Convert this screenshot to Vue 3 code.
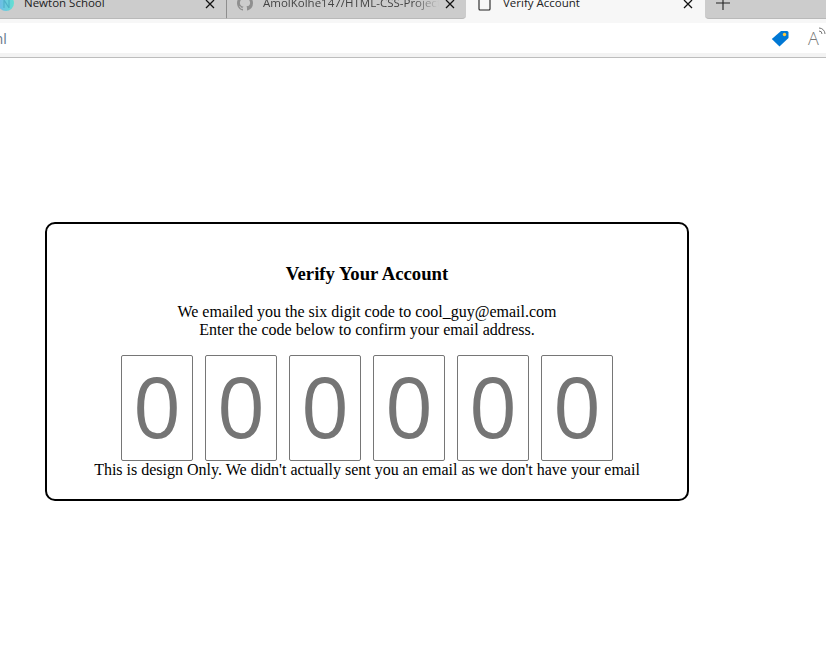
<script setup>
const digits = [0, 1, 2, 3, 4, 5];
</script>

<template>
  <div class="browser">
    <div class="tabstrip">
      <div class="tab first">
        <svg class="favicon" width="16" height="16" viewBox="0 0 16 16">
          <defs>
            <linearGradient id="fav" x1="0" y1="0" x2="1" y2="0">
              <stop offset="0" stop-color="#6fb7e8" />
              <stop offset="1" stop-color="#63e0d2" />
            </linearGradient>
          </defs>
          <circle cx="8" cy="3" r="8" fill="url(#fav)" />
          <path d="M6 0v8M6 0l5 8M11 0v8" stroke="#4fb0c8" stroke-width="1.2" fill="none" />
        </svg>
        <span class="tab-title">Newton School</span>
        <svg class="close" width="10" height="10" viewBox="0 0 10 10">
          <path d="M1 1l8 8M9 1l-8 8" stroke="#111" stroke-width="1.3" />
        </svg>
      </div>
      <div class="tab second">
        <svg class="gh" width="16" height="16" viewBox="0 0 16 16">
          <path
            d="M8 0C3.6 0 0 3.6 0 8c0 3.5 2.300 6.500 5.500 7.600.4.100.5-.2.500-.4v-1.400c-2.200.5-2.700-1-2.700-1-.4-.9-.9-1.200-.9-1.200-.7-.5.100-.5.100-.5.8.100 1.200.8 1.200.8.700 1.200 1.900.9 2.300.7.100-.5.300-.9.500-1.100-1.800-.2-3.600-.9-3.600-4 0-.9.300-1.600.8-2.100-.1-.2-.4-1 .1-2.100 0 0 .7-.2 2.200.8a7.600 7.600 0 0 1 4 0c1.500-1 2.200-.8 2.200-.8.400 1.100.200 1.900.100 2.100.5.600.8 1.300.8 2.100 0 3.100-1.900 3.700-3.700 3.900.3.300.6.800.6 1.500v2.200c0 .2.100.5.600.4A8 8 0 0 0 16 8c0-4.400-3.600-8-8-8z"
            fill="#8f8f8f"
          />
        </svg>
        <span class="tab-title fade">AmolKolhe147/HTML-CSS-Projects</span>
        <svg class="close" width="10" height="10" viewBox="0 0 10 10">
          <path d="M1 1l8 8M9 1l-8 8" stroke="#111" stroke-width="1.3" />
        </svg>
      </div>
      <div class="tab active">
        <svg class="doc" width="13" height="15" viewBox="0 0 13 15">
          <path d="M1 0v13q0 1 1 1h9q1 0 1-1V0" stroke="#222" stroke-width="1.100" fill="none" />
        </svg>
        <span class="tab-title">Verify Account</span>
        <svg class="close" width="10" height="10" viewBox="0 0 10 10">
          <path d="M1 1l8 8M9 1l-8 8" stroke="#111" stroke-width="1.3" />
        </svg>
      </div>
      <div class="tab rest">
        <svg width="14" height="14" viewBox="0 0 14 14">
          <path d="M7 0v14M0 7h14" stroke="#222" stroke-width="1.100" />
        </svg>
      </div>
    </div>
    <div class="toolbar">
      <span class="url">.html</span>
      <svg class="tag" width="18" height="17" viewBox="0 0 18 17">
        <path d="M10 1h6a1.500 1.500 0 0 1 1.500 1.500V8L8.500 16.500.8 9z" fill="#0078d4" />
        <circle cx="13.500" cy="4.500" r="1.700" fill="#ffc83d" />
      </svg>
      <span class="read">
        <span class="read-a">A</span>
        <svg class="waves" width="9" height="10" viewBox="0 0 9 10">
          <path d="M1 5a3 3 0 0 1 3 3M1 2a6 6 0 0 1 6 6" stroke="#777" stroke-width="1" fill="none" />
        </svg>
      </span>
    </div>
  </div>

  <main class="card">
    <h3>Verify Your Account</h3>
    <p>
      We emailed you the six digit code to cool_guy@email.com<br />
      Enter the code below to confirm your email address.
    </p>
    <div class="code-row">
      <input v-for="d in digits" :key="d" class="code" type="text" maxlength="1" placeholder="0" />
    </div>
    <div class="note">This is design Only. We didn't actually sent you an email as we don't have your email</div>
  </main>
</template>

<style scoped>
.browser {
  font-family: "Open Sans", "Noto Sans", sans-serif;
}

.tabstrip {
  display: flex;
  height: 23px;
  background: #f7f7f7;
  overflow: hidden;
}

.tab {
  display: flex;
  align-items: flex-start;
  box-sizing: border-box;
  height: 19px;
  background: #cccccc;
  border-bottom: 1px solid #b9b9b9;
  font-size: 11.500px;
  line-height: 16px;
  color: #222;
}

.tab-title {
  margin-top: -5px;
  white-space: nowrap;
  flex: 1;
  min-width: 0;
  overflow: hidden;
}

.fade {
  -webkit-mask-image: linear-gradient(to right, #000 85%, transparent);
  mask-image: linear-gradient(to right, #000 85%, transparent);
  color: #444;
}

.close {
  margin: -1px 10px 0 0;
  flex: none;
}

.first {
  width: 226px;
}

.favicon {
  margin: 0 10px 0 -2px;
  flex: none;
}

.first .close {
  margin-right: 11px;
}

.second {
  width: 240px;
  border-left: 1px solid #8e8e8e;
  padding-left: 10px;
  border-bottom-right-radius: 4px;
}

.gh {
  margin: -5px 10px 0 0;
  flex: none;
}

.second .close {
  margin-left: 6px;
  margin-right: 11px;
}

.active {
  width: 239px;
  height: 23px;
  background: #f7f7f7;
  border-bottom: 0;
  padding-left: 12px;
}

.doc {
  margin: -4px 12px 0 0;
  flex: none;
}

.active .close {
  margin-right: 12px;
}

.rest {
  flex: 1;
  padding-left: 11px;
  border-bottom-left-radius: 4px;
}

.rest svg {
  margin-top: -4px;
}

.toolbar {
  display: flex;
  align-items: center;
  box-sizing: border-box;
  height: 35px;
  background: #fff;
  border-bottom: 1px solid #bdbdbd;
  box-shadow: inset 0 -4px 0 #f3f3f3;
  padding-bottom: 4px;
  overflow: hidden;
}

.url {
  margin-left: -27px;
  font-size: 14px;
  color: #66788a;
}

.tag {
  margin-left: auto;
}

.read {
  position: relative;
  display: block;
  width: 18px;
  margin-left: 19px;
  height: 24px;
}

.read-a {
  font-size: 18px;
  font-weight: 300;
  line-height: 24px;
  color: #777;
}

.waves {
  position: absolute;
  top: 0;
  left: 10px;
}

.card {
  box-sizing: border-box;
  width: 644px;
  height: 279px;
  margin: 164px 0 0 45px;
  padding: 20px 0;
  border: 2px solid #000;
  border-radius: 10px;
  background: #fff;
  color: #000;
  font-family: "Liberation Serif", "Times New Roman", serif;
  font-size: 16px;
  line-height: 18px;
  text-align: center;
}

h3 {
  margin: 18.720px 0;
  font-size: 18.720px;
  line-height: 21.500px;
  font-weight: 700;
}

p {
  margin: 16px 0;
}

.code-row {
  display: flex;
  justify-content: center;
  gap: 12px;
}

.code {
  box-sizing: border-box;
  width: 72px;
  height: 106px;
  padding: 0 2px 4px;
  border: 1px solid #767676;
  border-radius: 2px;
  background: #fff;
  font-family: "Open Sans", "Noto Sans", sans-serif;
  font-size: 84px;
  font-weight: 400;
  text-align: center;
  outline: none;
}

.code::placeholder {
  color: #757575;
  opacity: 1;
}

.note {
  white-space: nowrap;
}
</style>
